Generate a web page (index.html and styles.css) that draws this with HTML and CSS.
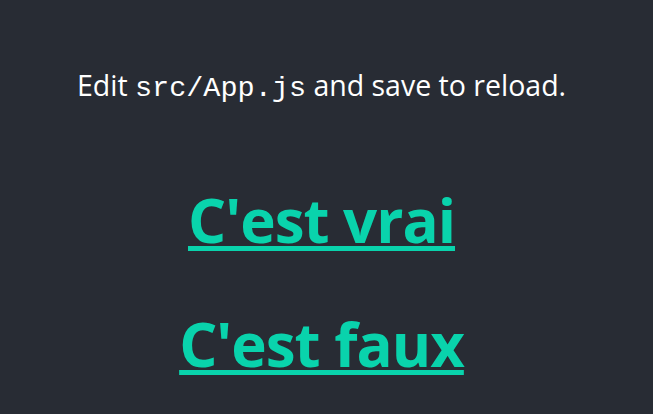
FILE: index.html
```html
<!DOCTYPE html>
<html>
<head>
<meta charset="utf-8">
<link rel="stylesheet" href="styles.css">
</head>
<body>
<div class="app">
  <p class="intro">Edit <code>src/App.js</code> and save to reload.</p>
  <a class="link first" href="#">C'est vrai</a>
  <a class="link" href="#">C'est faux</a>
</div>
</body>
</html>
```
FILE: styles.css
```css
html, body {
  margin: 0;
  height: 100%;
  background: #282c34;
}
.app {
  display: flex;
  flex-direction: column;
  align-items: center;
  font-family: "Open Sans", "Noto Sans", sans-serif;
  color: #fff;
  padding-top: 66px;
  padding-right: 10px;
}
.intro {
  margin: 0;
  font-size: 28.5px;
  line-height: 38px;
}
.intro code {
  font-family: "Liberation Mono", monospace;
  font-size: 28.5px;
}
.link {
  color: #09d3ac;
  font-weight: 700;
  font-size: 60px;
  line-height: 80px;
  letter-spacing: -1px;
  text-decoration: underline;
  text-decoration-thickness: 5px;
  text-underline-offset: 3px;
  margin-top: 44px;
}
.link.first {
  margin-top: 72px;
}
```
